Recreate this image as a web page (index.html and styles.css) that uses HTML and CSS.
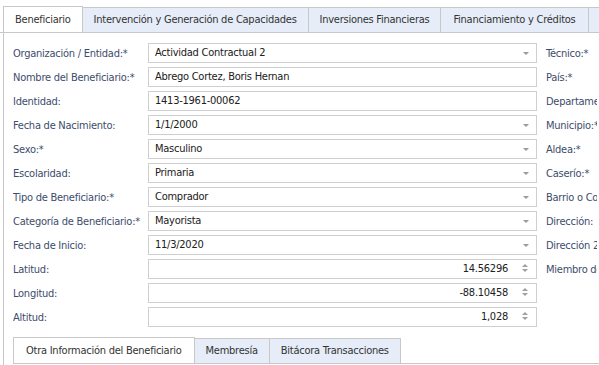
FILE: index.html
```html
<!DOCTYPE html>
<html lang="es">
<head>
  <meta charset="UTF-8">
  <title>Beneficiario</title>
  <link rel="stylesheet" href="styles.css">
</head>
<body>

<!-- Top tabs -->
<div class="tabs top-tabs">
  <div class="tab active">Beneficiario</div>
  <div class="tab">Intervención y Generación de Capacidades</div>
  <div class="tab">Inversiones Financieras</div>
  <div class="tab">Financiamiento y Créditos</div>
  <div class="tab">Otros</div>
</div>

<div class="panel">
  <div class="form">
    <label>Organización / Entidad:<span class="req">*</span></label>
    <div class="field combo">Actividad Contractual 2<span class="arrow"></span></div>
    <label class="side">Técnico:<span class="req">*</span></label>

    <label>Nombre del Beneficiario:<span class="req">*</span></label>
    <div class="field">Abrego Cortez, Boris Hernan</div>
    <label class="side">País:<span class="req">*</span></label>

    <label>Identidad:</label>
    <div class="field">1413-1961-00062</div>
    <label class="side">Departamento:<span class="req">*</span></label>

    <label>Fecha de Nacimiento:</label>
    <div class="field combo">1/1/2000<span class="arrow"></span></div>
    <label class="side">Municipio:<span class="req">*</span></label>

    <label>Sexo:<span class="req">*</span></label>
    <div class="field combo">Masculino<span class="arrow"></span></div>
    <label class="side">Aldea:<span class="req">*</span></label>

    <label>Escolaridad:</label>
    <div class="field combo">Primaria<span class="arrow"></span></div>
    <label class="side">Caserío:<span class="req">*</span></label>

    <label>Tipo de Beneficiario:<span class="req">*</span></label>
    <div class="field combo">Comprador<span class="arrow"></span></div>
    <label class="side">Barrio o Colonia:</label>

    <label>Categoría de Beneficiario:<span class="req">*</span></label>
    <div class="field combo">Mayorista<span class="arrow"></span></div>
    <label class="side">Dirección:</label>

    <label>Fecha de Inicio:</label>
    <div class="field combo">11/3/2020<span class="arrow"></span></div>
    <label class="side">Dirección 2:</label>

    <label>Latitud:</label>
    <div class="field spin">14.56296<span class="spinner"><i class="up"></i><i class="down"></i></span></div>
    <label class="side">Miembro de</label>

    <label>Longitud:</label>
    <div class="field spin">-88.10458<span class="spinner"><i class="up"></i><i class="down"></i></span></div>
    <span></span>

    <label>Altitud:</label>
    <div class="field spin">1,028<span class="spinner"><i class="up"></i><i class="down"></i></span></div>
    <span></span>
  </div>

  <!-- Bottom tabs -->
  <div class="tabs sub-tabs">
    <div class="tab active">Otra Información del Beneficiario</div>
    <div class="tab">Membresía</div>
    <div class="tab">Bitácora Transacciones</div>
  </div>
</div>

</body>
</html>
```

FILE: styles.css
```css
body {
  margin: 0;
  padding: 0;
  font-family: Tahoma, "DejaVu Sans Condensed", "Liberation Sans", sans-serif;
  font-size: 11px;
  letter-spacing: -0.25px;
  color: #202020;
  background: #fff;
  width: 599px;
  height: 365px;
  overflow: hidden;
  white-space: nowrap;
}

/* Tabs */
.tabs {
  display: flex;
  align-items: flex-end;
  border-bottom: 1px solid #c8c8c8;
  overflow: hidden;
}

.top-tabs {
  padding: 6px 0 0 3px;
}

.tab {
  flex-shrink: 0;
  height: 24px;
  line-height: 24px;
  padding: 0 11px;
  background: #e6edf8;
  border: 1px solid #c8c8c8;
  border-bottom: none;
  border-left: none;
  color: #333;
}

.top-tabs .tab:nth-child(4) {
  padding: 0 12px;
}

.tab.active {
  height: 25px;
  line-height: 25px;
  background: #fff;
  border-left: 1px solid #c8c8c8;
  margin-bottom: -1px;
  padding-bottom: 1px;
}

/* Panel */
.panel {
  margin-left: 3px;
  border-left: 1px solid #c8c8c8;
  padding: 10px 0 0 9px;
  height: 340px;
  overflow: hidden;
}

.form {
  display: grid;
  grid-template-columns: 135px 389px 60px;
  grid-auto-rows: 20px;
  row-gap: 4px;
  align-items: center;
}

.form label {
  color: #3c4c6c;
  overflow: hidden;
}

.form .side {
  padding-left: 9px;
}

.req {
  color: #3c4c6c;
}

.field {
  position: relative;
  box-sizing: border-box;
  height: 20px;
  line-height: 18px;
  border: 1px solid #cfcfcf;
  padding: 0 6px;
  color: #202020;
}

.field.spin {
  text-align: right;
  padding-right: 28px;
}

.arrow {
  position: absolute;
  right: 7px;
  top: 8px;
  border-left: 3px solid transparent;
  border-right: 3px solid transparent;
  border-top: 3px solid #9a9a9a;
}

.spinner {
  position: absolute;
  right: 8px;
  top: 4px;
  width: 6px;
  height: 10px;
}

.spinner i {
  display: block;
  border-left: 3px solid transparent;
  border-right: 3px solid transparent;
}

.spinner .up {
  border-bottom: 3px solid #a0a0a0;
  margin-bottom: 2px;
}

.spinner .down {
  border-top: 3px solid #a0a0a0;
}

/* Sub tabs */
.sub-tabs {
  margin-top: 10px;
}

.sub-tabs .tab {
  padding: 0 11px;
}

.sub-tabs .tab.active {
  padding: 0 12px 1px;
}
```
